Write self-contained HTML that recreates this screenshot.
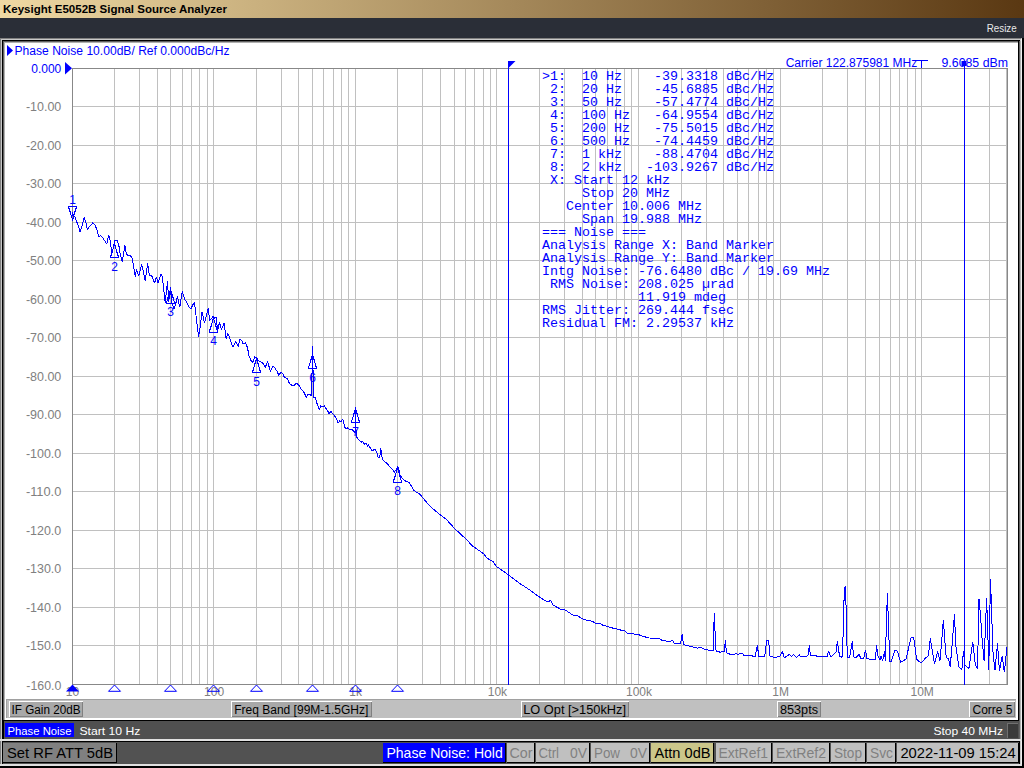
<!DOCTYPE html>
<html><head><meta charset="utf-8"><title>E5052B</title><style>html,body{margin:0;padding:0;background:#000;width:1024px;height:768px;overflow:hidden;position:relative}text{white-space:pre}</style></head><body>
<svg width="1024" height="768" viewBox="0 0 1024 768" style="position:absolute;left:0;top:0">
<defs><linearGradient id="tg" x1="0" y1="0" x2="1" y2="0"><stop offset="0" stop-color="#efd9a3"/><stop offset="1" stop-color="#5a3812"/></linearGradient></defs>
<rect x="0" y="0" width="1024" height="768" fill="#000"/>
<rect x="0" y="0" width="1024" height="18" fill="url(#tg)"/>
<text x="3" y="12.7" font-family="Liberation Sans" font-weight="700" font-size="11" textLength="224" lengthAdjust="spacingAndGlyphs" fill="#000">Keysight E5052B Signal Source Analyzer</text>
<rect x="0" y="18" width="1024" height="20" fill="#2a2e37"/>
<text x="986.7" y="31.9" font-family="Liberation Sans" font-size="11" textLength="30" lengthAdjust="spacingAndGlyphs" fill="#e8e8e8">Resize</text>
<g shape-rendering="crispEdges">
<rect x="0" y="38" width="1022" height="728" fill="#c8c8c8"/>
<rect x="0" y="38" width="1021" height="1" fill="#808080"/>
<rect x="0" y="38" width="1" height="728" fill="#808080"/>
<rect x="1021" y="39" width="1" height="727" fill="#f0f0f0"/>
<rect x="2" y="40" width="1018" height="699" fill="#000"/>
<rect x="1019" y="41" width="1" height="698" fill="#606060"/>
<rect x="1020" y="41" width="1" height="698" fill="#b0b0b0"/>
<rect x="3" y="41" width="1015" height="679" fill="#606060"/>
<rect x="4" y="42" width="1014" height="678" fill="#b0b0b0"/>
<rect x="5" y="43" width="1013" height="677" fill="#ffffff"/>
<rect x="4" y="721" width="1015" height="18" fill="#505050"/>
<rect x="0" y="739" width="1022" height="2" fill="#e0e0e0"/>
<rect x="2" y="741" width="1018" height="23" fill="#000"/>
<rect x="3" y="742" width="1016" height="22" fill="#525252"/>
<rect x="0" y="764" width="1022" height="2" fill="#e0e0e0"/>
<rect x="0" y="766" width="1024" height="2" fill="#000"/>
</g>
<g shape-rendering="crispEdges" stroke="#c0c0c0" stroke-width="1">
<line x1="114.5" y1="68" x2="114.5" y2="684"/>
<line x1="139.5" y1="68" x2="139.5" y2="684"/>
<line x1="157.5" y1="68" x2="157.5" y2="684"/>
<line x1="170.5" y1="68" x2="170.5" y2="684"/>
<line x1="182.5" y1="68" x2="182.5" y2="684"/>
<line x1="191.5" y1="68" x2="191.5" y2="684"/>
<line x1="199.5" y1="68" x2="199.5" y2="684"/>
<line x1="207.5" y1="68" x2="207.5" y2="684"/>
<line x1="213.5" y1="68" x2="213.5" y2="684"/>
<line x1="256.5" y1="68" x2="256.5" y2="684"/>
<line x1="281.5" y1="68" x2="281.5" y2="684"/>
<line x1="298.5" y1="68" x2="298.5" y2="684"/>
<line x1="312.5" y1="68" x2="312.5" y2="684"/>
<line x1="323.5" y1="68" x2="323.5" y2="684"/>
<line x1="333.5" y1="68" x2="333.5" y2="684"/>
<line x1="341.5" y1="68" x2="341.5" y2="684"/>
<line x1="348.5" y1="68" x2="348.5" y2="684"/>
<line x1="355.5" y1="68" x2="355.5" y2="684"/>
<line x1="397.5" y1="68" x2="397.5" y2="684"/>
<line x1="422.5" y1="68" x2="422.5" y2="684"/>
<line x1="440.5" y1="68" x2="440.5" y2="684"/>
<line x1="454.5" y1="68" x2="454.5" y2="684"/>
<line x1="465.5" y1="68" x2="465.5" y2="684"/>
<line x1="474.5" y1="68" x2="474.5" y2="684"/>
<line x1="483.5" y1="68" x2="483.5" y2="684"/>
<line x1="490.5" y1="68" x2="490.5" y2="684"/>
<line x1="496.5" y1="68" x2="496.5" y2="684"/>
<line x1="539.5" y1="68" x2="539.5" y2="684"/>
<line x1="564.5" y1="68" x2="564.5" y2="684"/>
<line x1="582.5" y1="68" x2="582.5" y2="684"/>
<line x1="595.5" y1="68" x2="595.5" y2="684"/>
<line x1="607.5" y1="68" x2="607.5" y2="684"/>
<line x1="616.5" y1="68" x2="616.5" y2="684"/>
<line x1="624.5" y1="68" x2="624.5" y2="684"/>
<line x1="631.5" y1="68" x2="631.5" y2="684"/>
<line x1="638.5" y1="68" x2="638.5" y2="684"/>
<line x1="681.5" y1="68" x2="681.5" y2="684"/>
<line x1="706.5" y1="68" x2="706.5" y2="684"/>
<line x1="723.5" y1="68" x2="723.5" y2="684"/>
<line x1="737.5" y1="68" x2="737.5" y2="684"/>
<line x1="748.5" y1="68" x2="748.5" y2="684"/>
<line x1="758.5" y1="68" x2="758.5" y2="684"/>
<line x1="766.5" y1="68" x2="766.5" y2="684"/>
<line x1="773.5" y1="68" x2="773.5" y2="684"/>
<line x1="780.5" y1="68" x2="780.5" y2="684"/>
<line x1="822.5" y1="68" x2="822.5" y2="684"/>
<line x1="847.5" y1="68" x2="847.5" y2="684"/>
<line x1="865.5" y1="68" x2="865.5" y2="684"/>
<line x1="879.5" y1="68" x2="879.5" y2="684"/>
<line x1="890.5" y1="68" x2="890.5" y2="684"/>
<line x1="899.5" y1="68" x2="899.5" y2="684"/>
<line x1="907.5" y1="68" x2="907.5" y2="684"/>
<line x1="915.5" y1="68" x2="915.5" y2="684"/>
<line x1="921.5" y1="68" x2="921.5" y2="684"/>
<line x1="964.5" y1="68" x2="964.5" y2="684"/>
<line x1="989.5" y1="68" x2="989.5" y2="684"/>
<line x1="1006.5" y1="68" x2="1006.5" y2="684"/>
<line x1="72" y1="106.5" x2="1007" y2="106.5"/>
<line x1="72" y1="145.5" x2="1007" y2="145.5"/>
<line x1="72" y1="183.5" x2="1007" y2="183.5"/>
<line x1="72" y1="222.5" x2="1007" y2="222.5"/>
<line x1="72" y1="260.5" x2="1007" y2="260.5"/>
<line x1="72" y1="299.5" x2="1007" y2="299.5"/>
<line x1="72" y1="337.5" x2="1007" y2="337.5"/>
<line x1="72" y1="376.5" x2="1007" y2="376.5"/>
<line x1="72" y1="414.5" x2="1007" y2="414.5"/>
<line x1="72" y1="453.5" x2="1007" y2="453.5"/>
<line x1="72" y1="491.5" x2="1007" y2="491.5"/>
<line x1="72" y1="530.5" x2="1007" y2="530.5"/>
<line x1="72" y1="568.5" x2="1007" y2="568.5"/>
<line x1="72" y1="607.5" x2="1007" y2="607.5"/>
<line x1="72" y1="645.5" x2="1007" y2="645.5"/>
</g>
<g shape-rendering="crispEdges" fill="#888">
<rect x="72" y="68" width="936" height="1"/><rect x="72" y="684" width="936" height="1"/>
<rect x="72" y="68" width="1" height="617"/><rect x="1007" y="68" width="1" height="617"/>
</g>
<polygon points="7,45 13,50.5 7,56" fill="#0000ff"/>
<text x="14.5" y="54.6" font-family="Liberation Sans" font-size="12" textLength="215" lengthAdjust="spacingAndGlyphs" fill="#0000ff">Phase Noise 10.00dB/ Ref 0.000dBc/Hz</text>
<g font-family="Liberation Sans" font-size="12" text-anchor="end" fill="#808080">
<text x="61.3" y="72.6" fill="#0000ff">0.000</text>
<text x="61.3" y="110.6" textLength="35.4" lengthAdjust="spacingAndGlyphs">-10.00</text>
<text x="61.3" y="149.6" textLength="35.4" lengthAdjust="spacingAndGlyphs">-20.00</text>
<text x="61.3" y="187.6" textLength="35.4" lengthAdjust="spacingAndGlyphs">-30.00</text>
<text x="61.3" y="226.6" textLength="35.4" lengthAdjust="spacingAndGlyphs">-40.00</text>
<text x="61.3" y="264.6" textLength="35.4" lengthAdjust="spacingAndGlyphs">-50.00</text>
<text x="61.3" y="303.6" textLength="35.4" lengthAdjust="spacingAndGlyphs">-60.00</text>
<text x="61.3" y="341.6" textLength="35.4" lengthAdjust="spacingAndGlyphs">-70.00</text>
<text x="61.3" y="380.6" textLength="35.4" lengthAdjust="spacingAndGlyphs">-80.00</text>
<text x="61.3" y="418.6" textLength="35.4" lengthAdjust="spacingAndGlyphs">-90.00</text>
<text x="61.3" y="457.6" textLength="35.4" lengthAdjust="spacingAndGlyphs">-100.0</text>
<text x="61.3" y="495.6" textLength="35.4" lengthAdjust="spacingAndGlyphs">-110.0</text>
<text x="61.3" y="534.6" textLength="35.4" lengthAdjust="spacingAndGlyphs">-120.0</text>
<text x="61.3" y="572.6" textLength="35.4" lengthAdjust="spacingAndGlyphs">-130.0</text>
<text x="61.3" y="611.6" textLength="35.4" lengthAdjust="spacingAndGlyphs">-140.0</text>
<text x="61.3" y="649.6" textLength="35.4" lengthAdjust="spacingAndGlyphs">-150.0</text>
<text x="61.3" y="689.7" textLength="35" lengthAdjust="spacingAndGlyphs">-160.0</text>
</g>
<polygon points="65,62 72,68.3 65,74.5" fill="#0000ff"/>
<g font-family="Liberation Sans" font-size="12" text-anchor="middle" fill="#808080">
<text x="72.5" y="696.2">10</text>
<text x="214.1" y="696.2">100</text>
<text x="355.7" y="696.2">1k</text>
<text x="497.4" y="696.2">10k</text>
<text x="639.0" y="696.2">100k</text>
<text x="780.6" y="696.2">1M</text>
<text x="922.2" y="696.2">10M</text>
</g>
<g shape-rendering="crispEdges" fill="#0000ff">
<rect x="508" y="61" width="1" height="624"/>
<rect x="964" y="61" width="1" height="624"/>
</g>
<polygon points="508,61 515.5,61 508,68.5" fill="#0000ff"/>
<rect x="961.5" y="61" width="5" height="5" fill="#0000ff"/>
<g shape-rendering="crispEdges" fill="#0000ff"><rect x="916" y="60" width="12" height="1"/><rect x="921" y="60" width="1" height="8"/></g>
<text x="785.7" y="66.6" font-family="Liberation Sans" font-size="12" textLength="131.5" lengthAdjust="spacingAndGlyphs" fill="#0000ff">Carrier 122.875981 MHz</text>
<text x="941.5" y="66.6" font-family="Liberation Sans" font-size="12" textLength="66.5" lengthAdjust="spacingAndGlyphs" fill="#0000ff">9.6085 dBm</text>
<polyline points="72.50,212.00 73.30,218.50 74.40,215.80 76.30,220.74 78.20,225.69 80.10,232.00 82.20,225.09 84.30,217.40 85.85,222.54 87.40,229.90 89.00,227.30 90.80,225.29 92.60,223.10 95.25,225.20 97.08,230.60 98.90,236.70 100.70,235.80 102.50,237.20 104.60,240.62 106.70,244.00 108.80,235.10 110.40,241.40 111.40,251.25 112.40,252.80 114.50,240.80 117.10,240.30 118.70,244.50 120.25,254.40 122.30,261.70 124.90,245.50 126.50,254.40 128.00,255.40 130.10,255.50 132.20,258.00 133.75,267.18 135.30,276.70 136.40,269.00 138.80,276.00 141.70,264.40 143.45,271.78 145.20,281.40 147.60,263.20 149.30,275.50 150.80,275.04 152.30,276.70 154.60,283.10 156.40,276.70 158.10,283.10 160.70,274.30 162.20,276.10 163.70,289.35 165.20,303.00 167.50,281.40 168.70,301.90 170.40,288.40 171.60,301.90 174.00,308.90 175.75,303.60 177.50,296.60 179.80,307.20 182.20,291.30 184.50,299.00 186.55,301.82 188.60,306.60 190.90,308.90 192.70,304.98 194.50,302.50 196.55,320.08 198.60,337.00 200.35,325.56 202.10,311.80 204.40,323.00 206.35,315.85 208.30,308.30 209.70,320.60 212.60,317.10 214.50,318.00 216.30,316.70 217.60,331.00 219.60,321.90 221.50,329.70 224.10,323.20 226.10,338.90 228.00,333.60 229.73,337.64 231.47,343.86 233.20,346.70 235.80,341.50 238.40,346.70 239.70,339.50 241.35,340.00 243.00,343.40 245.60,342.80 247.60,348.00 248.90,355.80 250.85,360.20 252.80,362.30 254.70,357.10 256.70,358.40 259.30,361.00 261.90,362.30 263.50,364.23 265.10,367.50 267.70,361.60 270.30,371.40 273.00,366.20 274.93,368.09 276.87,371.04 278.80,375.30 280.80,372.10 282.53,373.42 284.27,376.98 286.00,377.90 287.50,379.04 289.00,382.49 290.50,384.40 292.15,385.49 293.80,385.70 295.40,383.99 297.00,383.10 299.60,386.40 301.23,389.30 302.85,390.50 304.48,393.24 306.10,397.40 307.85,394.86 309.60,394.20 311.60,396.00 312.50,346.00 313.60,397.00 315.00,397.00 316.70,402.70 319.30,409.90 320.60,406.00 322.45,406.58 324.30,406.00 325.90,408.37 327.50,410.61 329.10,413.80 331.00,411.20 332.75,413.84 334.50,415.78 336.25,418.30 338.20,422.90 339.73,420.96 341.27,421.24 342.80,419.00 344.70,427.40 346.23,428.70 347.77,427.91 349.30,429.40 352.00,429.40 355.10,432.50 355.30,408.60 356.25,436.40 357.40,438.00 361.00,442.30 362.50,441.50 364.50,444.20 366.00,443.00 367.60,445.80 368.40,445.00 371.50,450.00 373.40,450.00 375.00,449.30 377.00,452.80 377.70,456.30 379.30,458.30 380.10,454.80 380.50,448.10 381.25,451.25 382.40,459.50 386.00,462.60 389.00,465.70 394.50,472.00 396.90,468.40 398.40,467.30 400.00,474.70 403.10,479.40 406.00,481.30 409.30,482.60 413.90,490.40 416.50,492.30 420.00,494.30 424.40,499.80 430.60,506.90 440.00,514.70 446.25,519.40 455.60,529.50 465.00,538.10 472.80,546.25 483.75,553.75 486.90,558.10 493.10,561.60 496.25,566.25 508.40,574.80 519.70,583.40 530.60,590.50 536.90,595.20 540.00,597.30 544.70,600.50 548.60,602.00 550.20,600.00 553.30,605.20 560.30,609.00 564.20,609.40 572.80,615.00 577.50,615.60 583.00,619.20 593.10,621.60 595.50,623.40 600.90,623.90 602.50,625.00 610.30,627.50 616.60,629.00 622.80,630.60 624.40,630.20 627.50,633.30 633.75,634.00 638.40,634.40 641.60,636.00 649.40,638.00 657.20,638.40 658.75,638.00 661.90,640.30 669.70,641.60 672.50,640.30 674.00,643.10 680.60,643.10 682.20,634.00 683.40,644.70 690.00,646.25 697.80,648.10 700.00,647.20 703.80,648.90 708.25,650.10 713.30,650.10 713.70,632.40 714.30,613.10 715.00,630.50 715.50,648.20 716.50,651.00 720.30,652.30 722.90,651.40 724.10,652.30 725.40,640.40 726.30,652.30 727.30,653.30 730.50,654.30 734.90,654.30 736.20,653.30 738.10,654.60 740.00,653.30 742.50,653.60 743.80,655.20 752.00,655.20 752.70,656.50 755.20,656.50 757.40,645.10 758.70,656.50 764.70,656.50 766.65,640.40 768.60,640.40 770.00,655.90 773.60,657.10 776.20,657.40 780.20,655.90 782.30,651.40 784.40,657.80 789.50,654.30 791.40,656.50 793.70,654.60 796.50,657.40 799.70,654.60 800.30,656.90 807.90,655.90 809.40,645.10 810.40,655.90 827.20,656.20 828.50,651.40 831.10,657.20 835.00,653.30 836.30,652.00 837.30,641.40 838.20,646.80 839.50,656.00 841.50,657.20 842.40,656.00 843.40,625.30 844.30,588.90 845.40,586.30 846.00,604.50 846.70,639.70 847.60,657.20 849.70,657.20 851.00,649.40 852.30,641.40 853.60,656.60 855.80,657.90 859.00,654.60 861.00,658.50 863.60,658.50 865.60,650.00 866.90,658.50 871.40,659.60 875.30,659.60 876.60,645.30 877.90,656.00 879.90,659.80 881.20,656.00 882.50,661.10 884.50,651.40 885.40,661.10 886.40,622.70 887.40,593.20 888.40,622.00 889.70,661.10 891.00,661.80 894.90,650.00 897.50,651.40 900.70,662.40 905.90,659.20 911.10,637.70 913.75,637.70 915.00,647.30 916.60,659.00 918.10,660.60 921.25,663.00 926.00,657.50 928.30,656.00 930.30,638.40 932.20,649.70 934.50,663.75 937.70,651.25 940.00,660.60 941.60,641.90 943.40,619.70 944.70,638.75 946.25,657.50 948.60,659.00 950.20,666.90 952.50,640.30 954.40,614.50 956.00,646.60 958.75,666.90 961.90,669.20 963.40,651.25 965.00,665.30 968.90,668.40 972.80,642.20 975.20,663.75 977.50,669.20 979.00,598.90 980.60,616.90 982.20,640.30 984.10,660.60 986.60,598.10 987.70,627.80 988.75,670.00 990.50,579.00 991.60,612.20 993.10,654.40 995.00,670.00 997.50,643.40 999.40,670.80 1002.20,656.00 1004.40,672.30 1007.00,646.60" fill="none" stroke="#0000ff" stroke-width="1.0" stroke-linejoin="miter" stroke-miterlimit="2" shape-rendering="crispEdges"/>
<g fill="none" stroke="#0000ff" stroke-width="1.1" shape-rendering="crispEdges">
<polygon points="72.5,219.4 68.3,206.4 76.7,206.4"/>
<polygon points="114.5,243.9 110.3,257.9 118.7,257.9"/>
<polygon points="170.5,289.3 166.3,303.3 174.7,303.3"/>
<polygon points="213.5,318.1 209.3,332.1 217.7,332.1"/>
<polygon points="256.5,358.7 252.3,372.7 260.7,372.7"/>
<polygon points="312.5,354.6 308.3,368.6 316.7,368.6"/>
<polygon points="355.5,408.6 351.3,422.6 359.7,422.6"/>
<polygon points="397.5,468.1 393.3,482.1 401.7,482.1"/>
</g>
<g font-family="Liberation Sans" font-size="12" text-anchor="middle" fill="#0000ff">
<text x="72.5" y="203.9">1</text>
<text x="114.5" y="270.9">2</text>
<text x="170.5" y="316.3">3</text>
<text x="213.5" y="345.1">4</text>
<text x="256.5" y="385.7">5</text>
<text x="312.5" y="381.6">6</text>
<text x="355.5" y="435.6">7</text>
<text x="397.5" y="495.1">8</text>
</g>
<polygon points="72.5,684.5 66.0,691.5 79.0,691.5" fill="#0000ff"/>
<polygon points="114.5,685 108.5,691.3 120.5,691.3" fill="none" stroke="#0000ff" stroke-width="1.0"/>
<polygon points="170.5,685 164.5,691.3 176.5,691.3" fill="none" stroke="#0000ff" stroke-width="1.0"/>
<polygon points="213.5,685 207.5,691.3 219.5,691.3" fill="none" stroke="#0000ff" stroke-width="1.0"/>
<polygon points="256.5,685 250.5,691.3 262.5,691.3" fill="none" stroke="#0000ff" stroke-width="1.0"/>
<polygon points="312.5,685 306.5,691.3 318.5,691.3" fill="none" stroke="#0000ff" stroke-width="1.0"/>
<polygon points="355.5,685 349.5,691.3 361.5,691.3" fill="none" stroke="#0000ff" stroke-width="1.0"/>
<polygon points="397.5,685 391.5,691.3 403.5,691.3" fill="none" stroke="#0000ff" stroke-width="1.0"/>
<g font-family="Liberation Mono" font-size="13.333" fill="#0000ff" style="white-space:pre" xml:space="preserve">
<text x="542" y="79.6">&gt;1:  10 Hz    -39.3318 dBc/Hz</text>
<text x="542" y="92.6"> 2:  20 Hz    -45.6885 dBc/Hz</text>
<text x="542" y="105.6"> 3:  50 Hz    -57.4774 dBc/Hz</text>
<text x="542" y="118.6"> 4:  100 Hz   -64.9554 dBc/Hz</text>
<text x="542" y="131.6"> 5:  200 Hz   -75.5015 dBc/Hz</text>
<text x="542" y="144.6"> 6:  500 Hz   -74.4459 dBc/Hz</text>
<text x="542" y="157.6"> 7:  1 kHz    -88.4704 dBc/Hz</text>
<text x="542" y="170.6"> 8:  2 kHz   -103.9267 dBc/Hz</text>
<text x="542" y="183.6"> X: Start 12 kHz</text>
<text x="542" y="196.6">     Stop 20 MHz</text>
<text x="542" y="209.6">   Center 10.006 MHz</text>
<text x="542" y="222.6">     Span 19.988 MHz</text>
<text x="542" y="235.6">=== Noise ===</text>
<text x="542" y="248.6">Analysis Range X: Band Marker</text>
<text x="542" y="261.6">Analysis Range Y: Band Marker</text>
<text x="542" y="274.6">Intg Noise: -76.6480 dBc / 19.69 MHz</text>
<text x="542" y="287.6"> RMS Noise: 208.025 µrad</text>
<text x="542" y="300.6">            11.919 mdeg</text>
<text x="542" y="313.6">RMS Jitter: 269.444 fsec</text>
<text x="542" y="326.6">Residual FM: 2.29537 kHz</text>
</g>
<g shape-rendering="crispEdges">
<rect x="6" y="699" width="1010" height="19" fill="#a0a0a0"/>
<rect x="7" y="700" width="1009" height="18" fill="#c0c0c0"/>
<rect x="9" y="701" width="74" height="16" fill="#ffffff"/>
<rect x="10" y="702" width="73" height="15" fill="#808080"/>
<rect x="10" y="702" width="72" height="14" fill="#a8a8a8"/>
<rect x="231" y="701" width="141" height="16" fill="#ffffff"/>
<rect x="232" y="702" width="140" height="15" fill="#808080"/>
<rect x="232" y="702" width="139" height="14" fill="#a8a8a8"/>
<rect x="521" y="701" width="108" height="16" fill="#ffffff"/>
<rect x="522" y="702" width="107" height="15" fill="#808080"/>
<rect x="522" y="702" width="106" height="14" fill="#a8a8a8"/>
<rect x="777" y="701" width="44" height="16" fill="#ffffff"/>
<rect x="778" y="702" width="43" height="15" fill="#808080"/>
<rect x="778" y="702" width="42" height="14" fill="#a8a8a8"/>
<rect x="969" y="701" width="46" height="16" fill="#ffffff"/>
<rect x="970" y="702" width="45" height="15" fill="#808080"/>
<rect x="970" y="702" width="44" height="14" fill="#a8a8a8"/>
</g>
<g font-family="Liberation Sans" font-size="12" fill="#000">
<text x="11.5" y="713.7" textLength="69" lengthAdjust="spacingAndGlyphs">IF Gain 20dB</text>
<text x="234.2" y="713.7" textLength="134.2" lengthAdjust="spacingAndGlyphs">Freq Band [99M-1.5GHz]</text>
<text x="523.2" y="713.7" textLength="102.8" lengthAdjust="spacingAndGlyphs">LO Opt [&gt;150kHz]</text>
<text x="780" y="713.7" textLength="38" lengthAdjust="spacingAndGlyphs">853pts</text>
<text x="972.5" y="713.7" textLength="40" lengthAdjust="spacingAndGlyphs">Corre 5</text>
</g>
<g shape-rendering="crispEdges">
<rect x="5" y="723" width="69" height="14" fill="#0000ff"/>
<rect x="1007" y="723" width="11" height="15" fill="#707070"/>
<rect x="1008" y="724" width="10" height="14" fill="#3a3a3a"/>
</g>
<text x="7.5" y="734.5" font-family="Liberation Sans" font-size="11.5" textLength="64" lengthAdjust="spacingAndGlyphs" fill="#fff">Phase Noise</text>
<text x="79.4" y="734.5" font-family="Liberation Sans" font-size="11.5" textLength="61" lengthAdjust="spacingAndGlyphs" fill="#fff">Start 10 Hz</text>
<text x="933.4" y="734.7" font-family="Liberation Sans" font-size="11.5" textLength="69.6" lengthAdjust="spacingAndGlyphs" fill="#fff">Stop 40 MHz</text>
<g shape-rendering="crispEdges">
<rect x="3" y="743" width="114" height="20" fill="#000"/>
<rect x="3" y="743" width="113" height="19" fill="#808080"/>
<rect x="383" y="743" width="123" height="20" fill="#000"/>
<rect x="383" y="743" width="122" height="19" fill="#0000ff"/>
<rect x="507" y="743" width="28" height="20" fill="#000"/>
<rect x="507" y="743" width="27" height="19" fill="#c0c0c0"/>
<rect x="536" y="743" width="54" height="20" fill="#000"/>
<rect x="536" y="743" width="53" height="19" fill="#c0c0c0"/>
<rect x="591" y="743" width="59" height="20" fill="#000"/>
<rect x="591" y="743" width="58" height="19" fill="#c0c0c0"/>
<rect x="651" y="743" width="63" height="20" fill="#000"/>
<rect x="651" y="743" width="62" height="19" fill="#cbc68a"/>
<rect x="716" y="743" width="56" height="20" fill="#000"/>
<rect x="716" y="743" width="55" height="19" fill="#c0c0c0"/>
<rect x="773" y="743" width="57" height="20" fill="#000"/>
<rect x="773" y="743" width="56" height="19" fill="#c0c0c0"/>
<rect x="831" y="743" width="35" height="20" fill="#000"/>
<rect x="831" y="743" width="34" height="19" fill="#c0c0c0"/>
<rect x="867" y="743" width="29" height="20" fill="#000"/>
<rect x="867" y="743" width="28" height="19" fill="#c0c0c0"/>
<rect x="897" y="743" width="122" height="20" fill="#000"/>
<rect x="897" y="743" width="121" height="19" fill="#c0c0c0"/>
</g>
<text x="7" y="758.3" font-family="Liberation Sans" font-size="14.5" textLength="106" lengthAdjust="spacingAndGlyphs" fill="#000">Set RF ATT 5dB</text>
<text x="386.4" y="758.3" font-family="Liberation Sans" font-size="14.5" textLength="116.4" lengthAdjust="spacingAndGlyphs" fill="#fff">Phase Noise: Hold</text>
<text x="509.5" y="758.3" font-family="Liberation Sans" font-size="14.5" textLength="23" lengthAdjust="spacingAndGlyphs" fill="#808080">Cor</text>
<text x="538.5" y="758.3" font-family="Liberation Sans" font-size="14.5" textLength="20.5" lengthAdjust="spacingAndGlyphs" fill="#808080">Ctrl</text>
<text x="570" y="758.3" font-family="Liberation Sans" font-size="14.5" textLength="17" lengthAdjust="spacingAndGlyphs" fill="#808080">0V</text>
<text x="594" y="758.3" font-family="Liberation Sans" font-size="14.5" textLength="26" lengthAdjust="spacingAndGlyphs" fill="#808080">Pow</text>
<text x="630" y="758.3" font-family="Liberation Sans" font-size="14.5" textLength="17" lengthAdjust="spacingAndGlyphs" fill="#808080">0V</text>
<text x="654.5" y="758.3" font-family="Liberation Sans" font-size="14.5" textLength="56" lengthAdjust="spacingAndGlyphs" fill="#000">Attn 0dB</text>
<text x="718.5" y="758.3" font-family="Liberation Sans" font-size="14.5" textLength="49.5" lengthAdjust="spacingAndGlyphs" fill="#808080">ExtRef1</text>
<text x="776" y="758.3" font-family="Liberation Sans" font-size="14.5" textLength="50" lengthAdjust="spacingAndGlyphs" fill="#808080">ExtRef2</text>
<text x="834" y="758.3" font-family="Liberation Sans" font-size="14.5" textLength="28" lengthAdjust="spacingAndGlyphs" fill="#808080">Stop</text>
<text x="870" y="758.3" font-family="Liberation Sans" font-size="14.5" textLength="23" lengthAdjust="spacingAndGlyphs" fill="#808080">Svc</text>
<text x="900.4" y="758.3" font-family="Liberation Sans" font-size="14.5" textLength="115.3" lengthAdjust="spacingAndGlyphs" fill="#000">2022-11-09 15:24</text>
</svg>
</body></html>
